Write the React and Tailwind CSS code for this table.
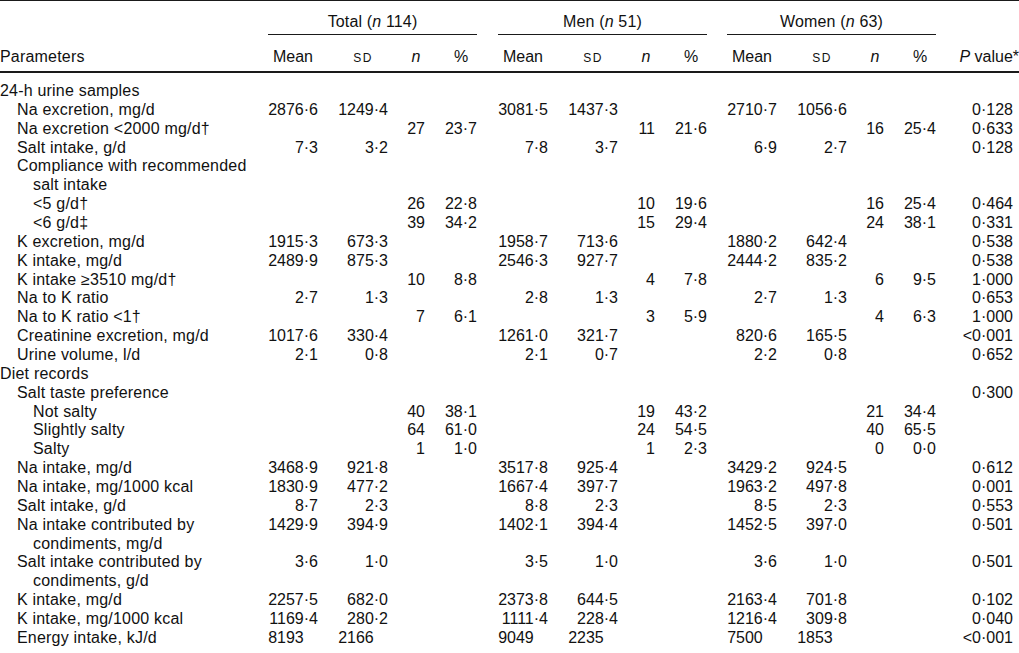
import React from 'react';

// column layout: label | Total (mean sd n %) | gap | Men (...) | gap | Women (...) | P
const COLS =
  'grid grid-cols-[268px_50px_70px_37px_52px_21px_50px_70px_37px_52px_20px_50px_70px_37px_52px_1fr]';

const rows = [
  { label: ['24-h urine samples'], lvl: 0 },
  { label: ['Na excretion, mg/d'], lvl: 1, t: ['2876·6', '1249·4', '', ''], m: ['3081·5', '1437·3', '', ''], w: ['2710·7', '1056·6', '', ''], p: '0·128' },
  { label: ['Na excretion <2000 mg/d†'], lvl: 1, t: ['', '', '27', '23·7'], m: ['', '', '11', '21·6'], w: ['', '', '16', '25·4'], p: '0·633' },
  { label: ['Salt intake, g/d'], lvl: 1, t: ['7·3', '3·2', '', ''], m: ['7·8', '3·7', '', ''], w: ['6·9', '2·7', '', ''], p: '0·128' },
  { label: ['Compliance with recommended', 'salt intake'], lvl: 1 },
  { label: ['<5 g/d†'], lvl: 2, t: ['', '', '26', '22·8'], m: ['', '', '10', '19·6'], w: ['', '', '16', '25·4'], p: '0·464' },
  { label: ['<6 g/d‡'], lvl: 2, t: ['', '', '39', '34·2'], m: ['', '', '15', '29·4'], w: ['', '', '24', '38·1'], p: '0·331' },
  { label: ['K excretion, mg/d'], lvl: 1, t: ['1915·3', '673·3', '', ''], m: ['1958·7', '713·6', '', ''], w: ['1880·2', '642·4', '', ''], p: '0·538' },
  { label: ['K intake, mg/d'], lvl: 1, t: ['2489·9', '875·3', '', ''], m: ['2546·3', '927·7', '', ''], w: ['2444·2', '835·2', '', ''], p: '0·538' },
  { label: ['K intake ≥3510 mg/d†'], lvl: 1, t: ['', '', '10', '8·8'], m: ['', '', '4', '7·8'], w: ['', '', '6', '9·5'], p: '1·000' },
  { label: ['Na to K ratio'], lvl: 1, t: ['2·7', '1·3', '', ''], m: ['2·8', '1·3', '', ''], w: ['2·7', '1·3', '', ''], p: '0·653' },
  { label: ['Na to K ratio <1†'], lvl: 1, t: ['', '', '7', '6·1'], m: ['', '', '3', '5·9'], w: ['', '', '4', '6·3'], p: '1·000' },
  { label: ['Creatinine excretion, mg/d'], lvl: 1, t: ['1017·6', '330·4', '', ''], m: ['1261·0', '321·7', '', ''], w: ['820·6', '165·5', '', ''], p: '<0·001' },
  { label: ['Urine volume, l/d'], lvl: 1, t: ['2·1', '0·8', '', ''], m: ['2·1', '0·7', '', ''], w: ['2·2', '0·8', '', ''], p: '0·652' },
  { label: ['Diet records'], lvl: 0 },
  { label: ['Salt taste preference'], lvl: 1, p: '0·300' },
  { label: ['Not salty'], lvl: 2, t: ['', '', '40', '38·1'], m: ['', '', '19', '43·2'], w: ['', '', '21', '34·4'] },
  { label: ['Slightly salty'], lvl: 2, t: ['', '', '64', '61·0'], m: ['', '', '24', '54·5'], w: ['', '', '40', '65·5'] },
  { label: ['Salty'], lvl: 2, t: ['', '', '1', '1·0'], m: ['', '', '1', '2·3'], w: ['', '', '0', '0·0'] },
  { label: ['Na intake, mg/d'], lvl: 1, t: ['3468·9', '921·8', '', ''], m: ['3517·8', '925·4', '', ''], w: ['3429·2', '924·5', '', ''], p: '0·612' },
  { label: ['Na intake, mg/1000 kcal'], lvl: 1, t: ['1830·9', '477·2', '', ''], m: ['1667·4', '397·7', '', ''], w: ['1963·2', '497·8', '', ''], p: '0·001' },
  { label: ['Salt intake, g/d'], lvl: 1, t: ['8·7', '2·3', '', ''], m: ['8·8', '2·3', '', ''], w: ['8·5', '2·3', '', ''], p: '0·553' },
  { label: ['Na intake contributed by', 'condiments, mg/d'], lvl: 1, t: ['1429·9', '394·9', '', ''], m: ['1402·1', '394·4', '', ''], w: ['1452·5', '397·0', '', ''], p: '0·501' },
  { label: ['Salt intake contributed by', 'condiments, g/d'], lvl: 1, t: ['3·6', '1·0', '', ''], m: ['3·5', '1·0', '', ''], w: ['3·6', '1·0', '', ''], p: '0·501' },
  { label: ['K intake, mg/d'], lvl: 1, t: ['2257·5', '682·0', '', ''], m: ['2373·8', '644·5', '', ''], w: ['2163·4', '701·8', '', ''], p: '0·102' },
  { label: ['K intake, mg/1000 kcal'], lvl: 1, t: ['1169·4', '280·2', '', ''], m: ['1111·4', '228·4', '', ''], w: ['1216·4', '309·8', '', ''], p: '0·040' },
  { label: ['Energy intake, kJ/d'], lvl: 1, t: ['8193', '2166', '', ''], m: ['9049', '2235', '', ''], w: ['7500', '1853', '', ''], p: '<0·001' },
];

const indent = ['pl-0', 'pl-[17px]', 'pl-[33px]'];

// mean / sd values are decimal aligned, whole numbers get an invisible tail
function Num({ v, aligned }) {
  if (!v) return <div />;
  const whole = aligned && !v.includes('·');
  return (
    <div className="text-right whitespace-nowrap">
      {v}
      {whole && <span className="invisible">·0</span>}
    </div>
  );
}

function Group({ vals = ['', '', '', ''] }) {
  return (
    <>
      <Num v={vals[0]} aligned />
      <Num v={vals[1]} aligned />
      <Num v={vals[2]} />
      <Num v={vals[3]} />
    </>
  );
}

function BodyRow({ row }) {
  const [first, ...rest] = row.label;
  return (
    <div className={COLS}>
      <div className="tracking-[0.2px]">
        <div className={`${indent[row.lvl]} whitespace-nowrap`}>{first}</div>
        {rest.map((l) => (
          <div key={l} className={`${indent[Math.min(row.lvl + 1, 2)]} whitespace-nowrap`}>
            {l}
          </div>
        ))}
      </div>
      <Group vals={row.t} />
      <div />
      <Group vals={row.m} />
      <div />
      <Group vals={row.w} />
      <div className="text-right pr-[6px] whitespace-nowrap">{row.p || ''}</div>
    </div>
  );
}

function SubHeads() {
  return (
    <>
      <div className="text-center">Mean</div>
      <div className="pl-[20px] text-center">
        <span className="text-[12px] tracking-[1.5px]">SD</span>
      </div>
      <div className="pl-[19px] text-center italic">n</div>
      <div className="pl-[20px] text-center">%</div>
    </>
  );
}

function GroupHead({ name, n }) {
  return (
    <div className="col-span-4 text-center pb-[3px] border-b border-[#1a1a1a] whitespace-nowrap tracking-[0.15px]">
      {name} (<i>n</i> {n})
    </div>
  );
}

export default function App() {
  return (
    <div className="w-[1019px] h-[653px] bg-white overflow-hidden text-[#111] text-[16px] font-['Liberation_Sans',Arial,sans-serif]">
      <div className="border-t border-[#1a1a1a]">
        {/* group heads */}
        <div className={`${COLS} pt-[11px] leading-[19px]`}>
          <div />
          <GroupHead name="Total" n="114" />
          <div />
          <GroupHead name="Men" n="51" />
          <div />
          <GroupHead name="Women" n="63" />
          <div />
        </div>

        {/* column heads */}
        <div className={`${COLS} pt-[12px] pb-[3px] leading-[19px] border-b-2 border-[#1a1a1a]`}>
          <div className="tracking-[0.2px]">Parameters</div>
          <SubHeads />
          <div />
          <SubHeads />
          <div />
          <SubHeads />
          <div className="text-right whitespace-nowrap">
            <i>P</i> value*
          </div>
        </div>

        {/* body */}
        <div className="pt-[9px] pb-[5px] leading-[18.86px] border-b-2 border-[#1a1a1a]">
          {rows.map((r, i) => (
            <BodyRow key={i} row={r} />
          ))}
        </div>
      </div>
    </div>
  );
}
